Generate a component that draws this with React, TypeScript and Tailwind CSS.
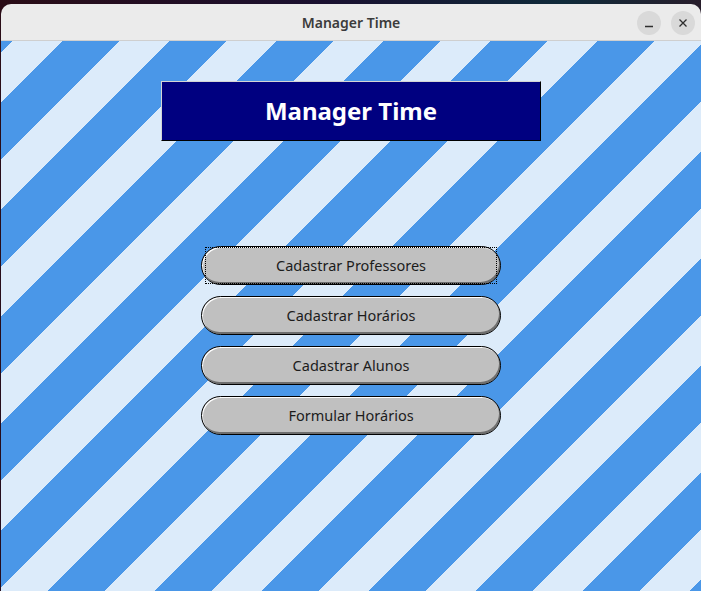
import React from 'react';

const menuItems = [
  'Cadastrar Professores',
  'Cadastrar Horários',
  'Cadastrar Alunos',
  'Formular Horários',
];

const MenuButton = ({ label, focused }: { label: string; focused?: boolean }) => (
  <button
    type="button"
    className="relative flex h-[39px] w-[300px] items-center justify-center rounded-full border border-black bg-[#c0c0c0] text-[14.5px] text-[#1c1c1c] shadow-[inset_1px_1px_0_#ffffff,inset_-1px_-2px_0_#6e6e6e]"
  >
    {focused && (
      <span className="pointer-events-none absolute inset-x-[3px] inset-y-0 border border-dotted border-black" />
    )}
    {label}
  </button>
);

export default function App() {
  return (
    <div
      className="flex h-[591px] w-[701px] flex-col bg-[linear-gradient(100deg,#2a0c16_0%,#1a1030_40%,#0f2a3a_70%,#3a1420_100%)] pt-[4px] pl-[1px]"
      style={{ fontFamily: '"Noto Sans", "Open Sans", sans-serif' }}
    >
      {/* window */}
      <div className="flex flex-1 flex-col overflow-hidden rounded-t-[10px]">
        {/* title bar */}
        <header className="relative flex h-[37px] shrink-0 items-center justify-center border-b border-[#cfcfcf] bg-[#ebebeb]">
          <span className="text-[14px] font-semibold text-[#3b3b3b]">Manager Time</span>
          <div className="absolute right-[6px] top-[7px] flex gap-[10px]">
            <span className="flex h-[24px] w-[24px] items-center justify-center rounded-full bg-[#d9d9d9]">
              <svg width="10" height="10" viewBox="0 0 10 10">
                <path d="M1 8.5h8" stroke="#2e2e2e" strokeWidth="1.3" />
              </svg>
            </span>
            <span className="flex h-[24px] w-[24px] items-center justify-center rounded-full bg-[#d9d9d9]">
              <svg width="10" height="10" viewBox="0 0 10 10">
                <path d="M1.5 1.5l7 7M8.5 1.5l-7 7" stroke="#2e2e2e" strokeWidth="1.3" />
              </svg>
            </span>
          </div>
        </header>

        {/* content */}
        <main className="flex flex-1 flex-col items-center bg-[repeating-linear-gradient(135deg,#4a97e8_0px,#4a97e8_7.8px,#dcebfa_7.8px,#dcebfa_43.8px,#4a97e8_43.8px,#4a97e8_75.66px)] pt-[40px]">
          <div className="flex h-[60px] w-[380px] items-center justify-center border-t border-l border-[#d4d4d4] border-r-black border-b-black border-r border-b bg-[#000080]">
            <h1 className="text-[24px] font-bold text-white">Manager Time</h1>
          </div>

          <div className="mt-[105px] flex flex-col gap-[11px]">
            {menuItems.map((item, i) => (
              <MenuButton key={item} label={item} focused={i === 0} />
            ))}
          </div>
        </main>
      </div>
    </div>
  );
}
